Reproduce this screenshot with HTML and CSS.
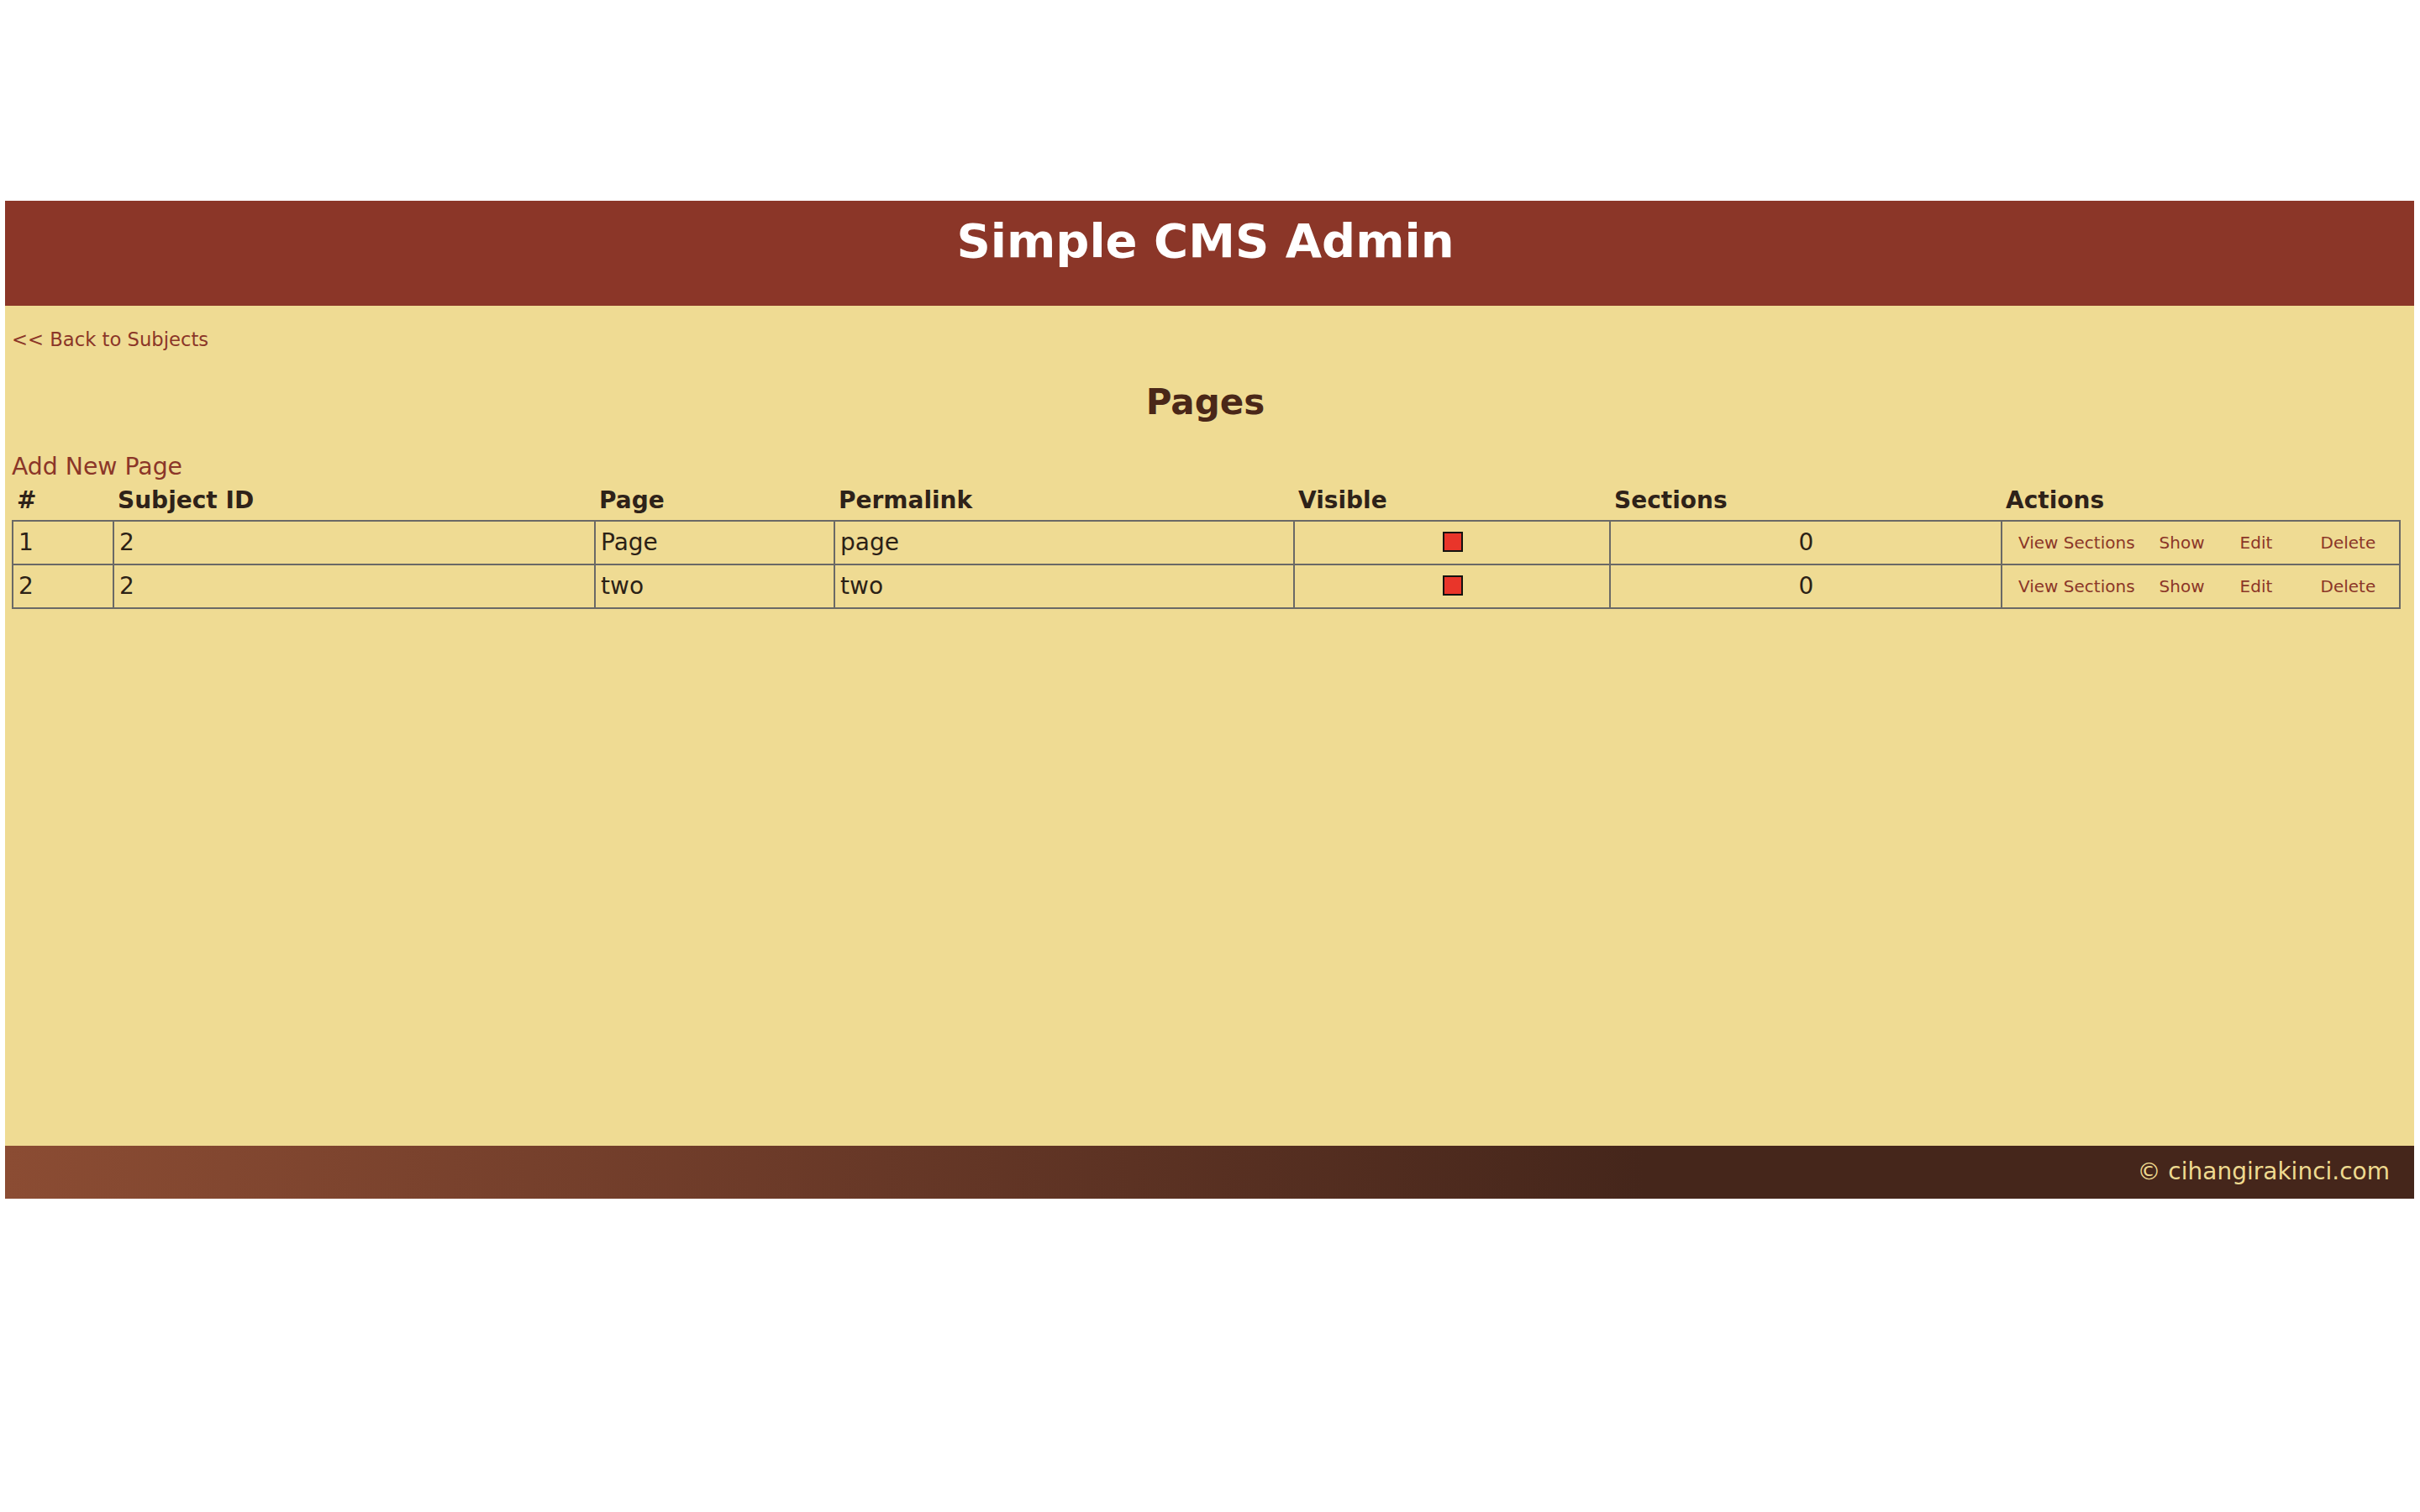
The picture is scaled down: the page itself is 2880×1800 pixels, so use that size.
FILE: index.html
```html
<!DOCTYPE html>
<html lang="en">
<head>
<meta charset="utf-8">
<title>Simple CMS Admin</title>
<link rel="stylesheet" href="styles.css">
</head>
<body>
<div class="page">
  <header class="site-header">
    <h1 class="site-title">Simple CMS Admin</h1>
  </header>
  <main class="content">
    <a class="back-link" href="#">&lt;&lt; Back to Subjects</a>
    <h2 class="section-title">Pages</h2>
    <a class="add-link" href="#">Add New Page</a>
    <table class="listing">
      <colgroup>
        <col class="c-num">
        <col class="c-subject">
        <col class="c-page">
        <col class="c-permalink">
        <col class="c-visible">
        <col class="c-sections">
        <col class="c-actions">
      </colgroup>
      <thead>
        <tr>
          <th>#</th>
          <th>Subject ID</th>
          <th>Page</th>
          <th>Permalink</th>
          <th>Visible</th>
          <th>Sections</th>
          <th>Actions</th>
        </tr>
      </thead>
      <tbody>
        <tr>
          <td>1</td>
          <td>2</td>
          <td>Page</td>
          <td>page</td>
          <td class="center"><span class="flag"></span></td>
          <td class="center">0</td>
          <td class="actions-cell"><div class="actions"><a href="#">View Sections</a><a href="#">Show</a><a href="#">Edit</a><a href="#">Delete</a></div></td>
        </tr>
        <tr>
          <td>2</td>
          <td>2</td>
          <td>two</td>
          <td>two</td>
          <td class="center"><span class="flag"></span></td>
          <td class="center">0</td>
          <td class="actions-cell"><div class="actions"><a href="#">View Sections</a><a href="#">Show</a><a href="#">Edit</a><a href="#">Delete</a></div></td>
        </tr>
      </tbody>
    </table>
  </main>
  <footer class="site-footer">&copy; cihangirakinci.com</footer>
</div>
</body>
</html>
```
FILE: styles.css
```css
html, body {
  margin: 0;
  padding: 0;
  background: #ffffff;
}

body {
  font-family: "DejaVu Sans", Verdana, sans-serif;
  color: #2b2116;
}

.page {
  margin: 239px 7px 0 6px;
}

.site-header {
  height: 125px;
  box-sizing: border-box;
  padding: 16px 10px 0 0;
  background: #8b3628;
}

.site-title {
  margin: 0;
  font-size: 56px;
  line-height: 64px;
  font-weight: bold;
  color: #ffffff;
  text-align: center;
}

.content {
  background: #efdb93;
  min-height: 1000px;
  box-sizing: border-box;
  padding: 27px 18px 0 8px;
}

.back-link {
  display: block;
  font-size: 22.7px;
  line-height: 26px;
  color: #8b3628;
  text-decoration: none;
}

.section-title {
  margin: 37px 0 0;
  font-size: 42px;
  line-height: 50px;
  font-weight: bold;
  color: #4a2718;
  text-align: center;
}

.add-link {
  display: block;
  margin-top: 35px;
  font-size: 28.3px;
  line-height: 34px;
  color: #8b3628;
  text-decoration: none;
}

.listing {
  width: 100%;
  margin-top: 4px;
  border-collapse: collapse;
  table-layout: fixed;
  font-size: 28px;
  line-height: 34px;
}

.c-num { width: 120px; }
.c-subject { width: 573px; }
.c-page { width: 285px; }
.c-permalink { width: 547px; }
.c-visible { width: 376px; }
.c-sections { width: 466px; }
.c-actions { width: 474px; }

.listing th {
  padding: 2px 5px 6px;
  text-align: left;
  font-weight: bold;
  color: #2e2219;
}

.listing td {
  padding: 8px 5px 8px 6px;
  border: 2px solid #6a6966;
  color: #2b2116;
  vertical-align: middle;
}

.listing td.center {
  text-align: center;
}

.flag {
  display: inline-block;
  width: 24px;
  height: 24px;
  box-sizing: border-box;
  border: 2px solid #141210;
  background: #e9352a;
  vertical-align: middle;
  position: relative;
  top: -2px;
}

.listing td.actions-cell {
  padding-left: 19px;
}

.actions {
  display: flex;
  column-gap: 29px;
  font-size: 20px;
  line-height: 34px;
}

.actions a {
  min-width: 67px;
  color: #8b3628;
  text-decoration: none;
}

.site-footer {
  height: 63px;
  box-sizing: border-box;
  padding: 14px 29px 0 0;
  background: linear-gradient(to right, #8b4c33 0%, #6d3b29 31%, #45261b 68%, #45261b 100%);
  color: #eeda90;
  font-size: 28px;
  line-height: 34px;
  text-align: right;
}
```
